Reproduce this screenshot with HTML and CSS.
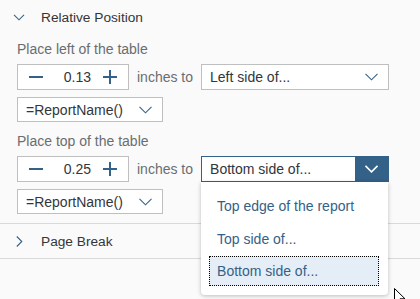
FILE: index.html
```html
<!DOCTYPE html>
<html lang="en">
<head>
  <meta charset="UTF-8" />
  <title>Relative Position</title>
  <link rel="stylesheet" href="styles.css">
</head>
<body>
  <!-- Relative Position panel -->
  <div class="panel-header">
    <svg class="chevron" width="11" height="7" viewBox="0 0 11 7"><path d="M0.5 0.8 L5.5 5.8 L10.5 0.8" fill="none" stroke="#346187" stroke-width="1.1"/></svg>
    <span class="panel-title">Relative Position</span>
  </div>

  <div class="panel-body">
    <div class="field-label">Place left of the table</div>
    <div class="field-row">
      <div class="stepper">
        <span class="step-btn"><svg width="14" height="14" viewBox="0 0 14 14"><path d="M0 7 H14" stroke="#346187" stroke-width="2"/></svg></span>
        <span class="step-value">0.13</span>
        <span class="step-btn"><svg width="14" height="14" viewBox="0 0 14 14"><path d="M0 7 H14 M7 0 V14" stroke="#346187" stroke-width="2"/></svg></span>
      </div>
      <span class="inches">inches to</span>
      <div class="select wide">
        <span class="select-text">Left side of...</span>
        <span class="select-arrow"><svg width="13" height="8" viewBox="0 0 13 8"><path d="M0.5 0.8 L6.5 6.8 L12.5 0.8" fill="none" stroke="#346187" stroke-width="1.1"/></svg></span>
      </div>
    </div>
    <div class="select narrow">
      <span class="select-text">=ReportName()</span>
      <span class="select-arrow"><svg width="13" height="8" viewBox="0 0 13 8"><path d="M0.5 0.8 L6.5 6.8 L12.5 0.8" fill="none" stroke="#346187" stroke-width="1.1"/></svg></span>
    </div>

    <div class="field-label">Place top of the table</div>
    <div class="field-row">
      <div class="stepper">
        <span class="step-btn"><svg width="14" height="14" viewBox="0 0 14 14"><path d="M0 7 H14" stroke="#346187" stroke-width="2"/></svg></span>
        <span class="step-value">0.25</span>
        <span class="step-btn"><svg width="14" height="14" viewBox="0 0 14 14"><path d="M0 7 H14 M7 0 V14" stroke="#346187" stroke-width="2"/></svg></span>
      </div>
      <span class="inches">inches to</span>
      <div class="select-wrap">
        <div class="select wide open">
          <span class="select-text">Bottom side of...</span>
          <span class="select-arrow"><svg width="13" height="8" viewBox="0 0 13 8"><path d="M0.5 0.8 L6.5 6.8 L12.5 0.8" fill="none" stroke="#ffffff" stroke-width="1.6"/></svg></span>
        </div>
        <ul class="dropdown">
          <li>Top edge of the report</li>
          <li>Top side of...</li>
          <li class="selected">Bottom side of...</li>
        </ul>
      </div>
    </div>
    <div class="select narrow last">
      <span class="select-text">=ReportName()</span>
      <span class="select-arrow"><svg width="13" height="8" viewBox="0 0 13 8"><path d="M0.5 0.8 L6.5 6.8 L12.5 0.8" fill="none" stroke="#346187" stroke-width="1.1"/></svg></span>
    </div>
  </div>

  <!-- Page Break panel -->
  <div class="panel-header collapsed">
    <svg class="chevron" width="7" height="11" viewBox="0 0 7 11"><path d="M0.8 0.5 L5.8 5.5 L0.8 10.5" fill="none" stroke="#346187" stroke-width="1.1"/></svg>
    <span class="panel-title">Page Break</span>
  </div>

  <svg class="cursor" width="14" height="20" viewBox="0 0 14 20"><path d="M0.5 0.5 L0.5 15 L4 11.5 L6.5 17.5 L8.5 16.6 L6 10.8 L11 10.8 Z" fill="#ffffff" stroke="#000000" stroke-width="1"/></svg>
</body>
</html>
```

FILE: styles.css
```css
body {
  margin: 0;
  padding: 0;
  background-color: #fafafa;
  font-family: "Liberation Sans", Arial, sans-serif;
  font-size: 14px;
  color: #32363a;
  height: 299px;
  overflow: hidden;
  position: relative;
}
.panel-header {
  display: flex;
  align-items: center;
  height: 34px;
}
.panel-header .chevron {
  margin-left: 8px;
  width: 22px;
}
.panel-header.collapsed {
  border-top: 1px solid #d9d9d9;
  border-bottom: 1px solid #d9d9d9;
  height: 34px;
}
.panel-header.collapsed .chevron {
  margin-left: 9px;
  width: 21px;
}
.panel-title {
  margin-left: 11px;
  font-size: 13.7px;
  color: #32363a;
}
.panel-body {
  padding: 7px 0 9px 17px;
}
.field-label {
  color: #6a6d70;
  font-size: 14px;
  margin-bottom: 7px;
  line-height: 16px;
}
.field-row {
  display: flex;
  align-items: center;
  margin-bottom: 7px;
}
.stepper {
  box-sizing: border-box;
  width: 112px;
  height: 26px;
  border: 1px solid #bfbfbf;
  background: #ffffff;
  display: flex;
  align-items: center;
}
.step-btn {
  width: 36px;
  display: flex;
  justify-content: center;
}
.step-btn svg {
  display: block;
}
.step-value {
  flex: 1;
  text-align: right;
  padding-right: 1px;
}
.inches {
  margin: 0 8px 0 8px;
  color: #6a6d70;
}
.select-wrap {
  position: relative;
}
.select {
  box-sizing: border-box;
  height: 26px;
  border: 1px solid #bfbfbf;
  background: #ffffff;
  display: flex;
  align-items: center;
}
.select.wide {
  width: 188px;
}
.select.narrow {
  width: 146px;
  height: 25px;
  margin-bottom: 11px;
}
.select.narrow.last {
  margin-bottom: 0;
}
.select-text {
  flex: 1;
  padding-left: 8px;
}
.select-arrow {
  width: 33px;
  height: 100%;
  display: flex;
  align-items: center;
  justify-content: center;
}
.select.open {
  border-color: #346187;
}
.select.open .select-arrow {
  background-color: #346187;
}
.dropdown {
  position: absolute;
  left: 0;
  top: 26px;
  width: 187px;
  box-sizing: border-box;
  margin: 0;
  padding: 8px 9px 9px 8px;
  list-style: none;
  background: #ffffff;
  border-radius: 0 0 4px 4px;
  box-shadow: 0 1px 4px rgba(0, 0, 0, 0.25);
  z-index: 2;
}
.dropdown li {
  color: #346187;
  height: 33px;
  line-height: 33px;
  padding-left: 8px;
}
.dropdown li.selected {
  background-color: #e5eef7;
  outline: 1px dotted #000000;
  outline-offset: -1px;
  height: 30px;
  line-height: 30px;
}
.cursor {
  position: absolute;
  left: 394px;
  top: 288px;
}
```
